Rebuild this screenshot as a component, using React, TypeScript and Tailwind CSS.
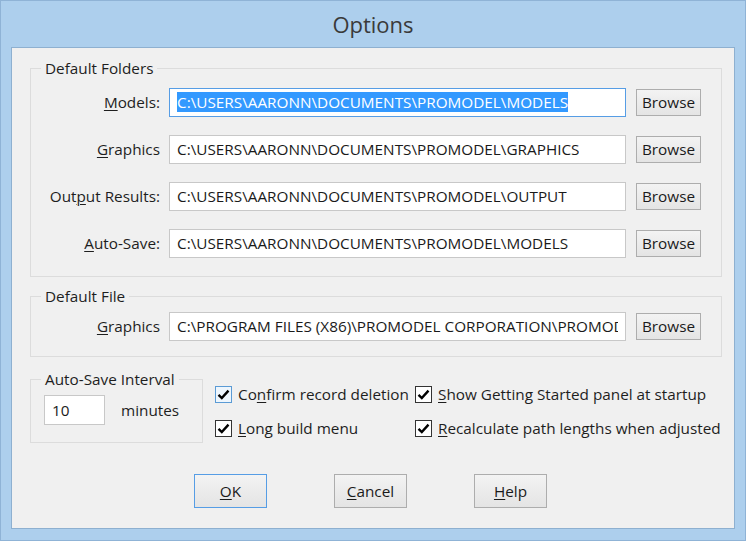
import React from "react";

const font = { fontFamily: '"Open Sans", "Noto Sans", sans-serif' };

const U = ({ children }: { children: React.ReactNode }) => (
  <span className="underline underline-offset-2 decoration-1">{children}</span>
);

const Check = ({ focus }: { focus?: boolean }) => (
  <div
    className={
      "w-[17px] h-[17px] flex items-center justify-center border " +
      (focus ? "border-[#5b9bd5] bg-[#eef6fd]" : "border-[#333333] bg-white")
    }
  >
    <svg width="13" height="13" viewBox="0 0 13 13">
      <path d="M1.5 6.8 L4.8 10 L11.5 2.6" fill="none" stroke="#000" strokeWidth="2.4" />
    </svg>
  </div>
);

const Browse = () => (
  <button className="w-[65px] h-[27px] border border-[#adadad] bg-gradient-to-b from-[#f3f3f3] to-[#e4e4e4] text-[15.3px] text-[#1a1a1a] leading-none">
    Browse
  </button>
);

const PathRow = ({
  label,
  value,
  selected,
}: {
  label: React.ReactNode;
  value: string;
  selected?: boolean;
}) => (
  <div className="flex items-center h-[29px]">
    <div className="w-[119px] text-right text-[15.3px] text-[#1e1e1e] whitespace-nowrap">{label}</div>
    <div
      className={
        "ml-[9px] w-[457px] h-[29px] bg-white border flex items-center px-[7px] overflow-hidden whitespace-nowrap text-[15.3px] text-[#1a1a1a] " +
        (selected ? "border-[#569de5]" : "border-[#c8c8c8]")
      }
    >
      <span className="block overflow-hidden">
        {selected ? <span className="bg-[#3399ff] text-white">{value}</span> : value}
      </span>
    </div>
    <div className="ml-[10px]">
      <Browse />
    </div>
  </div>
);

const Button = ({ children, primary }: { children: React.ReactNode; primary?: boolean }) => (
  <button
    className={
      "w-[73px] h-[34px] border bg-gradient-to-b from-[#f3f3f3] to-[#e4e4e4] text-[15.3px] text-[#1a1a1a] " +
      (primary ? "border-[#569de5]" : "border-[#adadad]")
    }
  >
    {children}
  </button>
);

export default function App() {
  return (
    <div className="w-[746px] h-[541px] bg-[#adcfed] border border-[#8fb3d6] flex flex-col" style={font}>
      <div className="h-[46px] flex items-center justify-center text-[22px] text-[#3a3a3a] pt-[1px]">Options</div>
      <div className="mx-[10px] h-[482px] bg-[#f0f0f0] border border-[#8eb0d0] pl-[18px] pr-[12px]">
        <fieldset className="mt-[10px] border border-[#dcdcdc] pl-[10px] pt-[10px] pb-[18px]">
          <legend className="px-[4px] text-[15.3px] leading-[20px] text-[#1e1e1e]">Default Folders</legend>
          <div className="flex flex-col gap-[18px]">
            <PathRow label={<><U>M</U>odels:</>} value="C:\USERS\AARONN\DOCUMENTS\PROMODEL\MODELS" selected />
            <PathRow label={<><U>G</U>raphics</>} value="C:\USERS\AARONN\DOCUMENTS\PROMODEL\GRAPHICS" />
            <PathRow label={<>Out<U>p</U>ut Results:</>} value="C:\USERS\AARONN\DOCUMENTS\PROMODEL\OUTPUT" />
            <PathRow label={<><U>A</U>uto-Save:</>} value="C:\USERS\AARONN\DOCUMENTS\PROMODEL\MODELS" />
          </div>
        </fieldset>
        <fieldset className="mt-[9px] border border-[#dcdcdc] pl-[10px] pt-[6px] pb-[15px]">
          <legend className="px-[4px] text-[15.3px] leading-[20px] text-[#1e1e1e]">Default File</legend>
          <PathRow label={<><U>G</U>raphics</>} value="C:\PROGRAM FILES (X86)\PROMODEL CORPORATION\PROMOD" />
        </fieldset>
        <div className="flex">
          <fieldset className="mt-[12px] w-[173px] border border-[#dcdcdc] pl-[10px] pt-[6px] pb-[17px]">
            <legend className="px-[4px] text-[15.3px] leading-[20px] text-[#1e1e1e]">Auto-Save Interval</legend>
            <div className="flex items-center">
              <div className="ml-[3px] w-[61px] h-[30px] bg-white border border-[#c8c8c8] flex items-center px-[7px] text-[15.3px] text-[#1a1a1a]">
                10
              </div>
              <span className="ml-[16px] text-[15.3px] text-[#1e1e1e]">minutes</span>
            </div>
          </fieldset>
          <div className="ml-[12px] mt-[26px] grid grid-cols-[200px_auto] gap-y-[11px] text-[15.3px] text-[#1e1e1e] h-fit">
            <div className="flex items-center gap-[6px]">
              <Check focus />
              <span>Co<U>n</U>firm record deletion</span>
            </div>
            <div className="flex items-center gap-[6px]">
              <Check />
              <span><U>S</U>how Getting Started panel at startup</span>
            </div>
            <div className="flex items-center gap-[6px]">
              <Check />
              <span><U>L</U>ong build menu</span>
            </div>
            <div className="flex items-center gap-[6px]">
              <Check />
              <span><U>R</U>ecalculate path lengths when adjusted</span>
            </div>
          </div>
        </div>
        <div className="mt-[31px] flex gap-[67px] pl-[164px]">
          <Button primary><U>O</U>K</Button>
          <Button><U>C</U>ancel</Button>
          <Button><U>H</U>elp</Button>
        </div>
      </div>
    </div>
  );
}
